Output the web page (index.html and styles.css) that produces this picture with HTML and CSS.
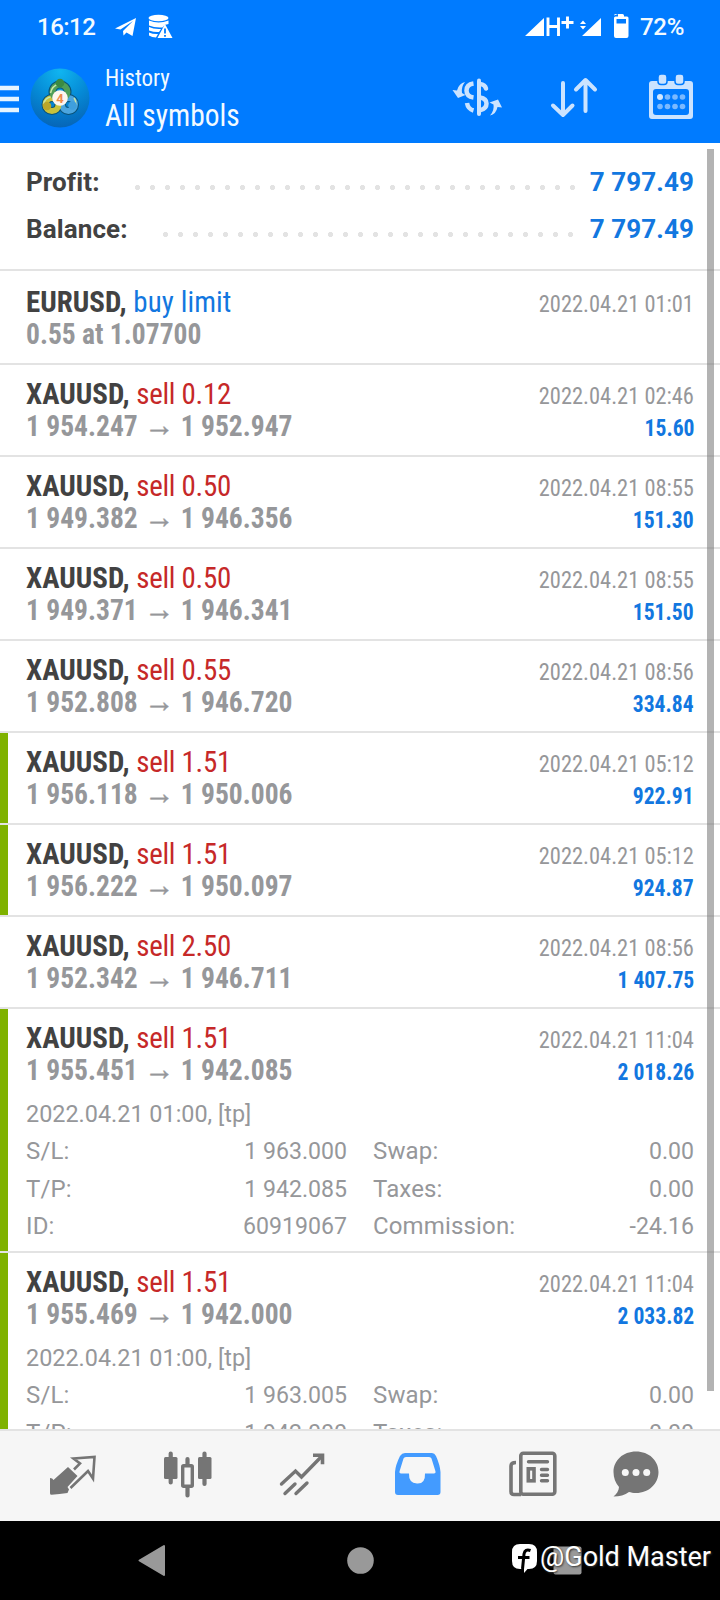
FILE: index.html
```html
<!DOCTYPE html>
<html lang="en">
<head>
<meta charset="utf-8">
<title>History</title>
<link rel="stylesheet" href="styles.css">
</head>
<body>
<div class="screen">
  <header class="top">
    <div class="status">
      <span class="clock">16:12</span>
      <svg class="st-left" width="60" height="26" viewBox="114 13 60 26">
        <path fill="#fff" d="M115 28.500 136 18 132.500 36 126.500 32.500 123.500 35.500 123 31 133 21 120.500 29.500Z"/>
        <ellipse cx="158.500" cy="18" rx="10" ry="3.300" fill="#fff"/>
        <path fill="#fff" d="M149 20.500q9.500 4 19.500 0v3.500l-4 1-2 2.500q-8 .5-13.500-2zM149 27q5 2.500 12 2l-2 3q-5 .3-10-1.500zM149 32.500q4 1.800 9 1.500l-2 3.500q-4-.2-7-2zM165 24l7.500 14h-15z"/>
        <path stroke="#007bff" stroke-width="1.800" d="M165 28.500v5M165 35v1.800"/>
      </svg>
      <svg class="st-right" width="106" height="26" viewBox="524 13 106 26">
        <g fill="#fff"><path d="M525 36 544 18v18zM582 36l19-18v18zM583 20.500l3 3.500h-6zM583 29.500l3-3.500h-6zM614 15.500q0-1.500 1.500-1.500h7q1.500 0 1.500 1.500v1h3q1.500 0 1.500 1.500v18q0 2-2 2h-10.500q-2 0-2-2V18q0-1.500 1.500-1.500h2.500V14"/></g>
        <path fill="none" stroke="#fff" stroke-width="2.900" d="M548 17.500v18.500M558.500 17.500v18.500M548 26.500h10.500M561.500 22.500h12M567.500 16.500v12"/>
        <path fill="#007bff" d="M616.500 19h9.500v4.500h-9.500z"/>
      </svg>
      <span class="pct">72%</span>
    </div>
    <div class="bar">
      <svg width="19" height="30" viewBox="0 0 19 30"><path stroke="#e6f4ff" stroke-width="4.600" d="M0 4h19M0 15h19M0 26h19"/></svg>
      <svg class="logo" width="60" height="60" viewBox="0 0 60 60">
        <defs>
          <radialGradient id="sky" cx=".5" cy=".05" r="1"><stop offset="0" stop-color="#10b5f0"/><stop offset=".5" stop-color="#058ad6"/><stop offset="1" stop-color="#0661b4"/></radialGradient>
        </defs>
        <circle cx="30" cy="30" r="29.500" fill="url(#sky)"/>
        <g fill="none">
          <g stroke="#0a5278" stroke-width="8"><circle cx="30" cy="24" r="7.500"/><circle cx="22" cy="36.500" r="6.500"/><circle cx="38.500" cy="36.500" r="6.500"/></g>
          <circle cx="38.500" cy="36.500" r="6.500" stroke="#4ba5df" stroke-width="6"/>
          <circle cx="22" cy="36.500" r="6.500" stroke="#c8c23d" stroke-width="6"/>
          <circle cx="30" cy="24" r="7.500" stroke="#4f9f58" stroke-width="6"/>
          <path d="M20.500 25q1.500-7 8-9M13.500 36q1.500-6 7-7M44 30q2.500 3 1.500 8" stroke="#c9e6a6" stroke-width="1.500"/>
        </g>
        <circle cx="30" cy="15" r="4.300" fill="#3a8a43"/><circle cx="17" cy="38" r="4.300" fill="#b9a62a"/><circle cx="42.500" cy="37.500" r="4.300" fill="#3f9fdd"/>
        <circle cx="30" cy="30" r="7.800" fill="#fdf6ee"/>
        <text x="30" y="34.800" text-anchor="middle" class="four">4</text>
      </svg>
      <div class="title"><div class="t1 cond">History</div><div class="t2 cond">All symbols</div></div>
      <svg class="ic-swap" width="52" height="46" viewBox="451 74 52 46">
        <g fill="none" stroke="#cbe3ff" stroke-width="4.500" stroke-linecap="round">
          <path d="M479 80.500V114" stroke-width="4"/>
          <path stroke-linecap="butt" d="M473.500 83.500q-7 1-7 7t7 7M467 103q1 6 6.500 7.500"/>
          <path d="M480 84q5 .5 6 4.500M480 97.500q6.500 1 6.500 6t-6 6.500"/>
        </g>
        <path fill="#cbe3ff" d="M465 82q-6 1-8 8.500l-4.500-.5 5.500 8 7.500-3-3.500-2q-1-6 3-11zM490 115.500q6-1 7.500-8.500l4.500.5-4-8-8.500 3 4 2q1 6-3.500 11z"/>
      </svg>
      <svg class="ic-sort" width="48" height="42" viewBox="550 76 48 42">
        <path fill="none" stroke="#cbe3ff" stroke-width="4" stroke-linecap="round" stroke-linejoin="round" d="M563 83v32M553 105.500l10 9.500 9.500-9.500M585.500 111V80M576 89.500 585.500 80l9.500 9.500"/>
      </svg>
      <svg class="ic-cal" width="46" height="46" viewBox="648 74 46 46">
        <path fill="#cbe3ff" fill-rule="evenodd" d="M652 81h38q3 0 3 3v32q0 3-3 3h-38q-3 0-3-3V84q0-3 3-3zm4 8q-3 0-3 3v20q0 3 3 3h30q3 0 3-3V92q0-3-3-3z"/>
        <g fill="#cbe3ff" stroke="#007bff" stroke-width="1.500"><rect x="658" y="74" width="9" height="10.500" rx="3"/><rect x="675" y="74" width="9" height="10.500" rx="3"/></g>
        <circle cx="660" cy="97" r="3" fill="#d4e8ff"/>
        <g fill="#7bb9ff"><circle cx="667.500" cy="97" r="2.800"/><circle cx="675" cy="97" r="2.800"/><circle cx="682.500" cy="97" r="2.800"/><circle cx="660" cy="106.500" r="2.800"/><circle cx="667.500" cy="106.500" r="2.800"/><circle cx="675" cy="106.500" r="2.800"/><circle cx="682.500" cy="106.500" r="2.800"/></g>
      </svg>
    </div>
  </header>

  <main class="list">
    <section class="summary">
      <div class="sum"><b>Profit:</b><i class="dots d1"></i><strong>7 797.49</strong></div>
      <div class="sum"><b>Balance:</b><i class="dots d2"></i><strong>7 797.49</strong></div>
    </section>
    <article class="deal order">
      <div class="line"><span class="sym cond">EURUSD, <em class="buy">buy limit</em></span><span class="date cond">2022.04.21 01:01</span></div>
      <div class="line"><span class="price cond">0.55 at 1.07700</span></div>
    </article>
    <article class="deal">
      <div class="line"><span class="sym cond">XAUUSD, <em>sell 0.12</em></span><span class="date cond">2022.04.21 02:46</span></div>
      <div class="line"><span class="price cond">1 954.247 <i>→</i> 1 952.947</span><span class="gain cond">15.60</span></div>
    </article>
    <article class="deal">
      <div class="line"><span class="sym cond">XAUUSD, <em>sell 0.50</em></span><span class="date cond">2022.04.21 08:55</span></div>
      <div class="line"><span class="price cond">1 949.382 <i>→</i> 1 946.356</span><span class="gain cond">151.30</span></div>
    </article>
    <article class="deal">
      <div class="line"><span class="sym cond">XAUUSD, <em>sell 0.50</em></span><span class="date cond">2022.04.21 08:55</span></div>
      <div class="line"><span class="price cond">1 949.371 <i>→</i> 1 946.341</span><span class="gain cond">151.50</span></div>
    </article>
    <article class="deal">
      <div class="line"><span class="sym cond">XAUUSD, <em>sell 0.55</em></span><span class="date cond">2022.04.21 08:56</span></div>
      <div class="line"><span class="price cond">1 952.808 <i>→</i> 1 946.720</span><span class="gain cond">334.84</span></div>
    </article>
    <article class="deal tp">
      <div class="line"><span class="sym cond">XAUUSD, <em>sell 1.51</em></span><span class="date cond">2022.04.21 05:12</span></div>
      <div class="line"><span class="price cond">1 956.118 <i>→</i> 1 950.006</span><span class="gain cond">922.91</span></div>
    </article>
    <article class="deal tp">
      <div class="line"><span class="sym cond">XAUUSD, <em>sell 1.51</em></span><span class="date cond">2022.04.21 05:12</span></div>
      <div class="line"><span class="price cond">1 956.222 <i>→</i> 1 950.097</span><span class="gain cond">924.87</span></div>
    </article>
    <article class="deal">
      <div class="line"><span class="sym cond">XAUUSD, <em>sell 2.50</em></span><span class="date cond">2022.04.21 08:56</span></div>
      <div class="line"><span class="price cond">1 952.342 <i>→</i> 1 946.711</span><span class="gain cond">1 407.75</span></div>
    </article>
    <article class="deal tp open">
      <div class="line"><span class="sym cond">XAUUSD, <em>sell 1.51</em></span><span class="date cond">2022.04.21 11:04</span></div>
      <div class="line"><span class="price cond">1 955.451 <i>→</i> 1 942.085</span><span class="gain cond">2 018.26</span></div>
      <div class="opened">2022.04.21 01:00, [tp]</div>
      <div class="grid">
        <span>S/L:</span><span class="r">1 963.000</span><span class="c">Swap:</span><span class="r">0.00</span>
        <span>T/P:</span><span class="r">1 942.085</span><span class="c">Taxes:</span><span class="r">0.00</span>
        <span>ID:</span><span class="r">60919067</span><span class="c">Commission:</span><span class="r">-24.16</span>
      </div>
    </article>
    <article class="deal tp open">
      <div class="line"><span class="sym cond">XAUUSD, <em>sell 1.51</em></span><span class="date cond">2022.04.21 11:04</span></div>
      <div class="line"><span class="price cond">1 955.469 <i>→</i> 1 942.000</span><span class="gain cond">2 033.82</span></div>
      <div class="opened">2022.04.21 01:00, [tp]</div>
      <div class="grid">
        <span>S/L:</span><span class="r">1 963.005</span><span class="c">Swap:</span><span class="r">0.00</span>
        <span>T/P:</span><span class="r">1 942.000</span><span class="c">Taxes:</span><span class="r">0.00</span>
      </div>
    </article>
    <div class="scroll"></div>
  </main>

  <nav class="tabs">
    <svg width="720" height="90" viewBox="0 1431 720 90">
      <path fill="#757575" d="M68 1467l9.500 9-10 11 1.500 2.500-1.500 3.500q-8 1-16 1.800-1.500 0-1.500-1.500V1478q2.500 0 3.500 2z"/>
      <path fill="none" stroke="#757575" stroke-width="2.600" d="M70.500 1488l17.500-17 5 7.500 1.500-21.500-21 1.500 6.500 5-6 6"/>
      <g stroke="#757575" stroke-width="4.200" stroke-linecap="round"><path d="M170.700 1453.500v29M204.500 1453.500v30.500M187.500 1459v8M187.500 1487v8.500"/></g>
      <g fill="#757575"><rect x="164" y="1457" width="13.500" height="22" rx="1.500"/><rect x="198" y="1457" width="13.500" height="22" rx="1.500"/></g>
      <rect x="182.700" y="1465.700" width="9.600" height="20.600" rx="1" fill="#f6f6f6" stroke="#757575" stroke-width="3.400"/>
      <path fill="none" stroke="#757575" stroke-width="3.400" stroke-linecap="round" d="M281.500 1484l14-13 6 6 20-20.500M285 1493.500l10-9.500M296 1493.500l11-10.500"/>
      <path fill="none" stroke="#757575" stroke-width="3.600" d="M313 1455.200h9.500v9"/>
      <path fill="#439bff" fill-rule="evenodd" d="M405 1453h27q2.500 0 4 3 4 9 4.500 16v20q0 3-3 3h-39.500q-3 0-3-3v-20q.5-7 5-16 2-3 5-3zm1 4q-2 0-2.500 1.500l-4 13q-.5 2 1.500 2h8q-.5 9.500 8 10t8-10h9q2 0 1.500-2l-4-13q-.5-1.500-2.500-1.500z"/>
      <g fill="none" stroke="#757575" stroke-width="3.600"><rect x="520.800" y="1453.300" width="34" height="41" rx="2.500"/><path d="M521 1494.500h-7q-3 0-3-3V1466q0-3.500 5-3.500"/><rect x="528.300" y="1468.800" width="5.700" height="12"/></g>
      <path stroke="#757575" stroke-width="3.400" stroke-linecap="round" d="M528.500 1461.700h19M541.500 1469.500h6M541.500 1475.200h6M541.500 1480.800h6"/>
      <path fill="#757575" d="M636 1451.500c13 0 22.500 9 22.500 20.500s-9.500 21-22.500 21c-3 0-5-.5-7-1-4 3-9.500 4.500-15.500 4.500 3-2.500 5.500-6 5.500-9.500-3.500-4-5.500-9-5.500-15 0-11.500 9.500-20.500 22.500-20.500z"/>
      <g fill="#f6f6f6"><circle cx="625.300" cy="1472.500" r="3.500"/><circle cx="636" cy="1472.500" r="3.500"/><circle cx="646.700" cy="1472.500" r="3.500"/></g>
    </svg>
  </nav>
  <footer class="sysnav">
    <svg width="720" height="79" viewBox="0 1521 720 79">
      <path fill="#999" stroke="#999" stroke-width="2" stroke-linejoin="round" d="M139.500 1560.500 164 1546v29z"/>
      <circle cx="360.500" cy="1560.500" r="13.300" fill="#999"/>
      <rect x="553.500" y="1546.500" width="28" height="28" rx="2" fill="#999"/>
    </svg>
    <div class="mark">
      <svg width="25" height="29" viewBox="0 0 25 29"><path fill="#fff" d="M8 0h9q8 0 8 8v9q0 8-8 8h-1.500L12 29v-4H8q-8 0-8-8V8q0-8 8-8z"/><path fill="none" stroke="#000" stroke-width="3" d="M18.500 6.500q-5.500-2-6.500 3.500l-1.500 15M6 13.500h11.500"/></svg>
      <span>@Gold Master</span>
    </div>
  </footer>
</div>
</body>
</html>
```
FILE: styles.css
```css
* { box-sizing: border-box; }
body { margin: 0; background: #fff; font-family: Roboto, "Liberation Sans", sans-serif; }
.screen { width: 720px; height: 1600px; display: flex; flex-direction: column; overflow: hidden; }
svg { display: block; flex: none; }
i, em { font-style: normal; }
.cond { font-stretch: 75%; white-space: pre; transform-origin: 0 50%; }

.top { height: 143px; background: #007bff; color: #f2faff; flex: none; }
.status { height: 52px; padding: 12px 0 0 37px; display: flex; align-items: flex-start; font-weight: 500; font-size: 24px; line-height: 30px; }
.clock { width: 77px; letter-spacing: -.5px; }
.st-left { margin-top: 1px; }
.st-right { margin: 1px 0 0 350px; }
.pct { margin-left: 10px; letter-spacing: -.3px; }
.bar { height: 91px; display: flex; align-items: flex-start; }
.bar > svg:first-child { margin-top: 32px; }
.logo { margin: 16px 0 0 11px; }
.four { font: 700 13px Roboto, sans-serif; fill: #ee8a4a; }
.title { margin: 9px 0 0 15px; width: 346px; }
.t1 { font-size: 24px; line-height: 34px; transform: scaleX(.955); }
.t2 { font-size: 31.500px; line-height: 42px; transform: scaleX(.935); }
.ic-swap { margin-top: 22px; }
.ic-sort { margin: 24px 0 0 47px; }
.ic-cal { margin: 22px 0 0 50px; }

.list { position: relative; height: 1286px; flex: none; overflow: hidden; }
.summary { height: 128px; padding-top: 24px; border-bottom: 2px solid #e3e3e3; }
.sum { display: flex; height: 47px; padding: 0 26px; line-height: 30px; font-size: 26px; color: #424242; align-items: flex-start; }
.sum b { font-weight: 700; letter-spacing: .1px; }
.sum strong { margin-left: auto; color: #1277e0; font-weight: 700; letter-spacing: .1px; }
.dots { height: 5px; margin-top: 18px; background: radial-gradient(circle at 2.5px 2.5px, #e3e3e3 2.3px, transparent 2.9px) 0 0 / 15px 5px; }
.d1 { width: 440px; margin-left: 35px; }
.d2 { width: 410px; margin-left: 35px; }

.deal { height: 92px; padding: 13px 26px 0; border-bottom: 2px solid #e3e3e3; position: relative; }
.deal.order { height: 94px; padding-top: 15px; }
.deal.open { height: 244px; }
.deal.tp::before { content: ""; position: absolute; left: 0; top: 0; bottom: 0; width: 7.500px; background: #7fb200; }
.line { display: flex; justify-content: space-between; align-items: baseline; height: 32px; line-height: 32px; }
.sym { font-size: 30px; font-weight: 700; color: #424242; transform: scaleX(.965); }
.sym em { font-weight: 400; color: #c62828; letter-spacing: -.3px; }
.sym .buy { color: #1277e0; letter-spacing: .1px; }
.date { font-size: 24px; color: #96979a; transform: scaleX(.935); transform-origin: 100% 50%; }
.price { font-size: 30px; font-weight: 700; color: #96979a; transform: scaleX(.918); }
.price i { font: 400 33px/20px "Liberation Sans", sans-serif; -webkit-text-stroke: .4px #96979a; }
.gain { font-size: 24px; font-weight: 700; color: #1277e0; transform: scaleX(.9); transform-origin: 100% 50%; }
.opened { margin-top: 9px; font-size: 24px; line-height: 38px; color: #96979a; transform: scaleX(.975); transform-origin: 0 50%; }
.grid { display: grid; grid-template-columns: 100px 221px 171px 176px; grid-auto-rows: 37.500px; line-height: 37px; font-size: 24px; color: #96979a; letter-spacing: .15px; }
.c { padding-left: 26px; }
.r { text-align: right; letter-spacing: 0; transform: scaleX(.963); transform-origin: 100% 50%; }
.scroll { position: absolute; left: 707px; top: 6px; width: 6.500px; height: 1242px; background: rgba(110,110,110,.52); }

.tabs { height: 92px; flex: none; border-top: 2px solid #e3e3e3; background: #f6f6f6; }
.sysnav { position: relative; height: 79px; background: #000; flex: none; }
.mark { position: absolute; left: 512px; top: 23px; display: flex; gap: 3px; align-items: flex-start; color: #fff; font-size: 27px; line-height: 26px; text-shadow: 1px 1px 2px #333; }
```
